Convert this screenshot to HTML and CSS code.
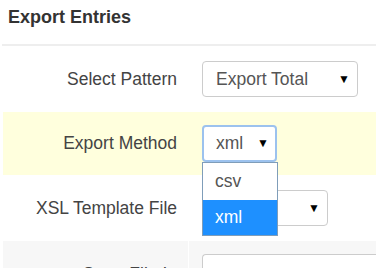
FILE: index.html
```html
<!DOCTYPE html>
<html lang="en">
<head>
    <meta charset="UTF-8">
    <meta name="viewport" content="width=device-width, initial-scale=1.0">
    <title>Export Entries</title>
    <link rel="stylesheet" href="styles.css">
</head>
<body>
    <div class="panel">
        <h3 class="panel-title">Export Entries</h3>
        <div class="form">
            <div class="row">
                <label class="label">Select Pattern</label>
                <div class="field">
                    <div class="select wide">Export Total <span class="caret">&#9660;</span></div>
                </div>
            </div>
            <div class="row active">
                <label class="label">Export Method</label>
                <div class="field">
                    <div class="select small focus">xml <span class="caret">&#9660;</span>
                        <ul class="dropdown">
                            <li>csv</li>
                            <li class="selected">xml</li>
                        </ul>
                    </div>
                </div>
            </div>
            <div class="row">
                <label class="label">XSL Template File</label>
                <div class="field">
                    <div class="select medium"><span class="caret">&#9660;</span></div>
                </div>
            </div>
            <div class="row alt">
                <label class="label">Store File In</label>
                <div class="field">
                    <div class="input"></div>
                </div>
            </div>
        </div>
    </div>
</body>
</html>
```

FILE: styles.css
```css
body {
    margin: 0;
    font-family: "Liberation Sans", Arial, sans-serif;
    color: #333;
    background: #fff;
    overflow: hidden;
}
.panel {
    padding-left: 2px;
}
.panel-title {
    margin: 0;
    padding: 7px 6px 0;
    height: 37px;
    font-size: 18px;
    font-weight: bold;
    color: #333;
    border-bottom: 2px solid #eee;
}
.form {
    padding-left: 1px;
}
.row {
    display: grid;
    grid-template-columns: 185px 1fr;
    align-items: center;
    padding: 15px 0;
}
.row.active {
    background: #ffffdd;
    padding: 13px 0;
}
.row.alt {
    background: #f7f7f7;
    align-items: start;
    padding: 13px 0 0;
    height: 40px;
}
.label {
    text-align: right;
    padding-right: 11px;
    font-size: 17.5px;
    color: #444;
}
.row.alt .label {
    padding-top: 10px;
}
.field {
    padding-left: 14px;
}
.row.alt .field {
    border-left: 1px solid #fff;
    margin-top: -13px;
    padding-top: 13px;
    padding-left: 13px;
    height: 40px;
}
.select {
    position: relative;
    box-sizing: border-box;
    height: 36px;
    border: 1px solid #ccc;
    border-radius: 4px;
    background: #fff;
    padding: 0 0 0 13px;
    line-height: 34px;
    font-size: 17.5px;
    color: #555;
}
.select.wide { width: 156px; }
.select.small { width: 75px; height: 37px; line-height: 35px; }
.select.medium { width: 126px; }
.select.focus {
    border: 2px solid #9cc2ee;
    padding-left: 12px;
    line-height: 33px;
}
.caret {
    position: absolute;
    right: 7px;
    top: 0;
    font-size: 12px;
    color: #000;
}
.select.focus .caret {
    right: 6px;
}
.dropdown {
    position: absolute;
    left: -2px;
    top: 35px;
    width: 74px;
    margin: 0;
    padding: 0;
    list-style: none;
    background: #fff;
    border: 1px solid #7f9db9;
    z-index: 2;
}
.dropdown li {
    height: 37px;
    line-height: 37px;
    padding-left: 12px;
    font-size: 17.5px;
    color: #555;
}
.dropdown li.selected {
    background: #1e90ff;
    color: #fff;
    height: 35px;
    line-height: 35px;
}
.input {
    box-sizing: border-box;
    height: 36px;
    border: 1px solid #ccc;
    border-right: none;
    border-radius: 4px 0 0 4px;
    background: #fff;
}
```
